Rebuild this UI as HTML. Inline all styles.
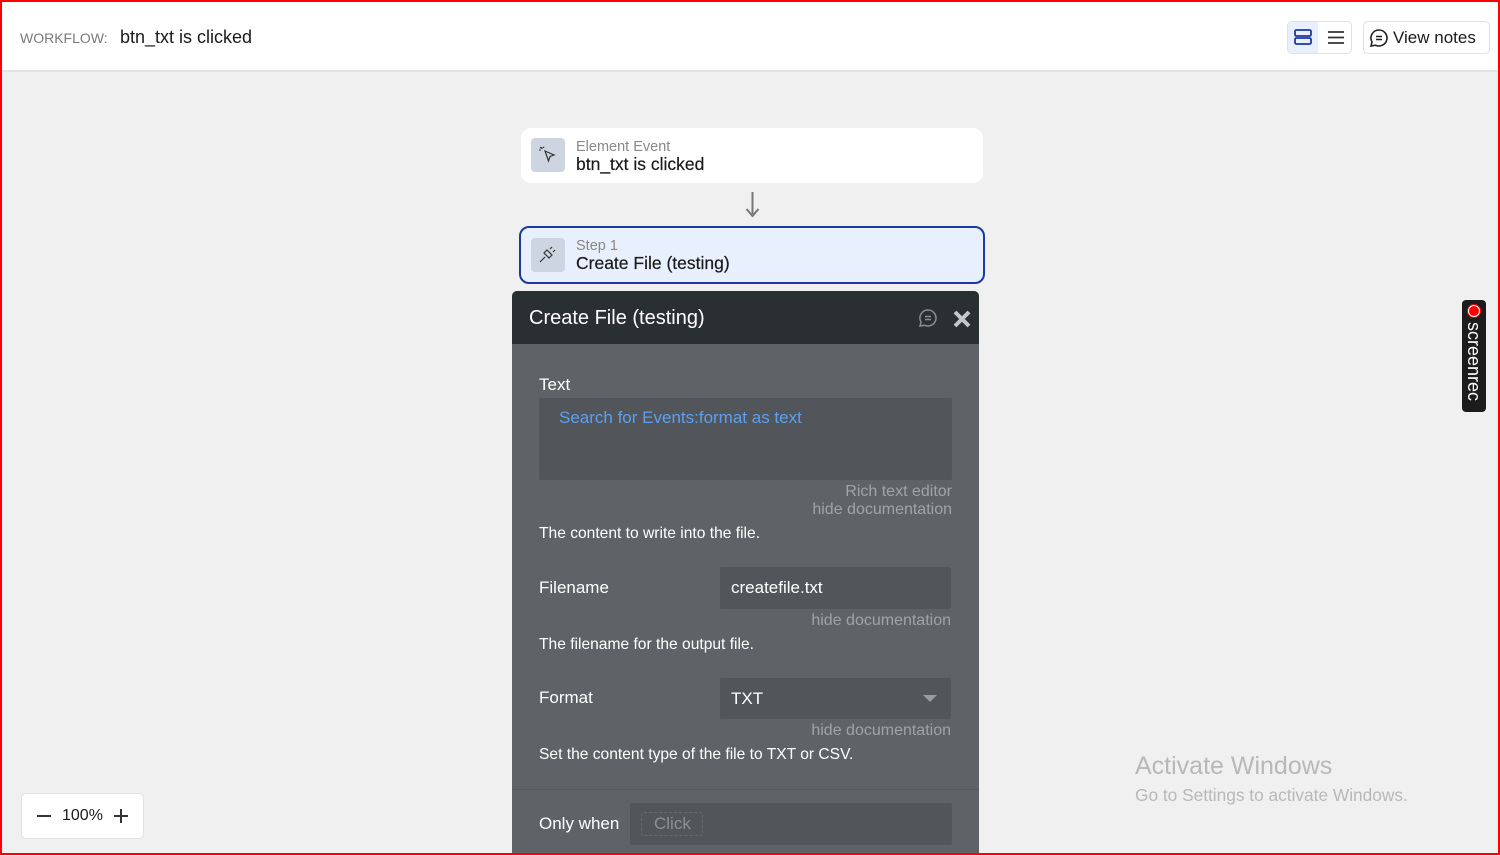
<!DOCTYPE html>
<html><head><meta charset="utf-8"><style>
*{box-sizing:border-box;margin:0;padding:0}
body{width:1500px;height:855px;overflow:hidden;background:#f0f0f0;font-family:"Liberation Sans",sans-serif;position:relative}
.a{position:absolute}
.frame{position:absolute;left:0;top:0;width:1500px;height:855px;border:2px solid #f00;z-index:50;pointer-events:none}
.hdr{left:0;top:0;width:1500px;height:72px;background:#fff;border-bottom:2px solid #e4e4e4}
.w{color:#fff}
.doc{color:#a0a3a6;font-size:16px;text-align:right}
.d{font-size:15.6px}
</style></head><body>
<div class="frame"></div>
<div class="a hdr"></div>
<div class="a" style="left:20px;top:30px;font-size:14px;color:#7a7a7a">WORKFLOW:</div>
<div class="a" style="left:120px;top:27px;font-size:18px;color:#1a1a1a">btn_txt is clicked</div>
<div class="a" style="left:1287px;top:21px;width:65px;height:33px;border:1px solid #e2e2e2;border-radius:5px;background:#fff"></div>
<div class="a" style="left:1288px;top:22px;width:30px;height:31px;background:#e8f0fd;border-radius:4px 0 0 4px"></div>
<svg class="a" style="left:1294px;top:29px" width="18" height="17"><rect x="1" y="1" width="16" height="6" rx="1.5" fill="none" stroke="#1a3aa0" stroke-width="1.8"/><rect x="1" y="9" width="16" height="6" rx="1.5" fill="none" stroke="#1a3aa0" stroke-width="1.8"/></svg>
<svg class="a" style="left:1327px;top:30px" width="18" height="15"><path d="M1 2H17M1 7.5H17M1 13H17" stroke="#333" stroke-width="1.8"/></svg>
<div class="a" style="left:1363px;top:21px;width:127px;height:33px;border:1px solid #e2e2e2;border-radius:5px;background:#fff"></div>
<svg class="a" style="left:1369px;top:28px" width="20" height="20"><path d="M10 2a8 8 0 1 1-3.5 15.2L2 18l1-4A8 8 0 0 1 10 2z" fill="none" stroke="#222" stroke-width="1.6"/><path d="M7 8.5h6M7 11.5h6" stroke="#222" stroke-width="1.5"/></svg>
<div class="a" style="left:1393px;top:28px;font-size:17px;color:#1a1a1a">View notes</div>

<div class="a" style="left:521px;top:128px;width:462px;height:55px;background:#fff;border-radius:10px"></div>
<div class="a" style="left:531px;top:138px;width:34px;height:34px;background:#ccd5e0;border-radius:4px"></div>
<svg class="a" style="left:539px;top:146px" width="18" height="18"><path d="M6 5l9 4-4 1.5L9.5 15z" fill="none" stroke="#333" stroke-width="1.2"/><path d="M3 1v2M0 4h2M1 1l1.5 1.5M5 0.5l-0.5 1.5" stroke="#333" stroke-width="1"/></svg>
<div class="a" style="left:576px;top:139px;font-size:14.5px;color:#888">Element Event</div>
<div class="a" style="left:576px;top:154px;font-size:17.5px;color:#1a1a1a;-webkit-text-stroke:0.2px #1a1a1a">btn_txt is clicked</div>
<svg class="a" style="left:745px;top:192px" width="15" height="26"><path d="M7.5 0V22" stroke="#777" stroke-width="2"/><path d="M1.5 17L7.5 24L13.5 17" fill="none" stroke="#777" stroke-width="2"/></svg>

<div class="a" style="left:519px;top:226px;width:466px;height:58px;background:#e8f0fd;border:2px solid #1a3aa0;border-radius:10px"></div>
<div class="a" style="left:531px;top:238px;width:34px;height:34px;background:#ccd5e0;border-radius:4px"></div>
<svg class="a" style="left:539px;top:245px" width="18" height="18"><path d="M8 5l5 5-3 3-5-5zM4 14l2-2M11 4l2-2M14 7l2-2M1 17l3-3" fill="none" stroke="#333" stroke-width="1.2"/></svg>
<div class="a" style="left:576px;top:238px;font-size:14.5px;color:#888">Step 1</div>
<div class="a" style="left:576px;top:253px;font-size:17.5px;color:#1a1a1a;-webkit-text-stroke:0.2px #1a1a1a">Create File (testing)</div>

<div class="a" style="left:512px;top:291px;width:467px;height:564px;background:#5f6367;border-radius:5px 5px 0 0;overflow:hidden">
<div class="a" style="left:0;top:0;width:467px;height:53px;background:#2a2f32"></div>
</div>
<div class="a w" style="left:529px;top:307px;font-size:20px">Create File (testing)</div>
<svg class="a" style="left:918px;top:308px" width="20" height="20"><path d="M10 2a8 8 0 1 1-3.5 15.2L2 18l1-4A8 8 0 0 1 10 2z" fill="none" stroke="#8a8e92" stroke-width="1.5"/><path d="M7 8.5h6M7 11.5h6" stroke="#8a8e92" stroke-width="1.4"/></svg>
<svg class="a" style="left:953px;top:310px" width="18" height="18"><path d="M2 2L16 16M16 2L2 16" stroke="#c4c6c8" stroke-width="4"/></svg>

<div class="a w" style="left:539px;top:375px;font-size:17px">Text</div>
<div class="a" style="left:539px;top:398px;width:413px;height:82px;background:#52565a;border-radius:2px"></div>
<div class="a" style="left:559px;top:408px;font-size:17px;color:#5aa0f0">Search for Events:format as text</div>
<div class="a doc" style="left:700px;width:252px;top:483px">Rich text editor</div>
<div class="a doc" style="left:700px;width:252px;top:501px">hide documentation</div>
<div class="a w d" style="left:539px;top:525px">The content to write into the file.</div>

<div class="a w" style="left:539px;top:578px;font-size:17px">Filename</div>
<div class="a" style="left:720px;top:567px;width:231px;height:42px;background:#52565a;border-radius:2px"></div>
<div class="a w" style="left:731px;top:578px;font-size:17px">createfile.txt</div>
<div class="a doc" style="left:700px;width:251px;top:612px">hide documentation</div>
<div class="a w d" style="left:539px;top:636px">The filename for the output file.</div>

<div class="a w" style="left:539px;top:688px;font-size:17px">Format</div>
<div class="a" style="left:720px;top:678px;width:231px;height:41px;background:#52565a;border-radius:2px"></div>
<div class="a w" style="left:731px;top:689px;font-size:17px">TXT</div>
<svg class="a" style="left:923px;top:695px" width="14" height="8"><path d="M0 0H14L7 7z" fill="#9a9da0"/></svg>
<div class="a doc" style="left:700px;width:251px;top:722px">hide documentation</div>
<div class="a w d" style="left:539px;top:746px">Set the content type of the file to TXT or CSV.</div>
<div class="a" style="left:512px;top:789px;width:467px;height:1px;background:#55595c"></div>
<div class="a w" style="left:539px;top:814px;font-size:17px">Only when</div>
<div class="a" style="left:630px;top:803px;width:322px;height:42px;background:#52565a;border-radius:2px"></div>
<div class="a" style="left:641px;top:812px;width:62px;height:24px;border:1px dashed #666a6e;border-radius:3px"></div>
<div class="a" style="left:654px;top:814px;font-size:17px;color:#8c9094">Click</div>

<div class="a" style="left:1462px;top:300px;width:24px;height:112px;background:#1c1c1c;border-radius:4px"></div>
<div class="a" style="left:1468px;top:305px;width:12px;height:12px;border-radius:50%;background:#f00;border:1px solid #fff;box-shadow:0 0 0 1px #f00"></div>
<div class="a" style="left:1464px;top:322px;writing-mode:vertical-rl;color:#fff;font-size:18px;line-height:20px">screenrec</div>

<div class="a" style="left:1135px;top:752px;font-size:25px;color:#b8b8b8">Activate Windows</div>
<div class="a" style="left:1135px;top:785px;font-size:17.3px;color:#b8b8b8">Go to Settings to activate Windows.</div>

<div class="a" style="left:21px;top:793px;width:123px;height:46px;background:#fff;border:1px solid #e2e2e2;border-radius:5px"></div>
<div class="a" style="left:37px;top:815px;width:14px;height:2px;background:#333"></div>
<div class="a" style="left:62px;top:807px;font-size:16px;color:#1a1a1a">100%</div>
<div class="a" style="left:114px;top:815px;width:14px;height:2px;background:#333"></div>
<div class="a" style="left:120px;top:809px;width:2px;height:14px;background:#333"></div>
</body></html>
